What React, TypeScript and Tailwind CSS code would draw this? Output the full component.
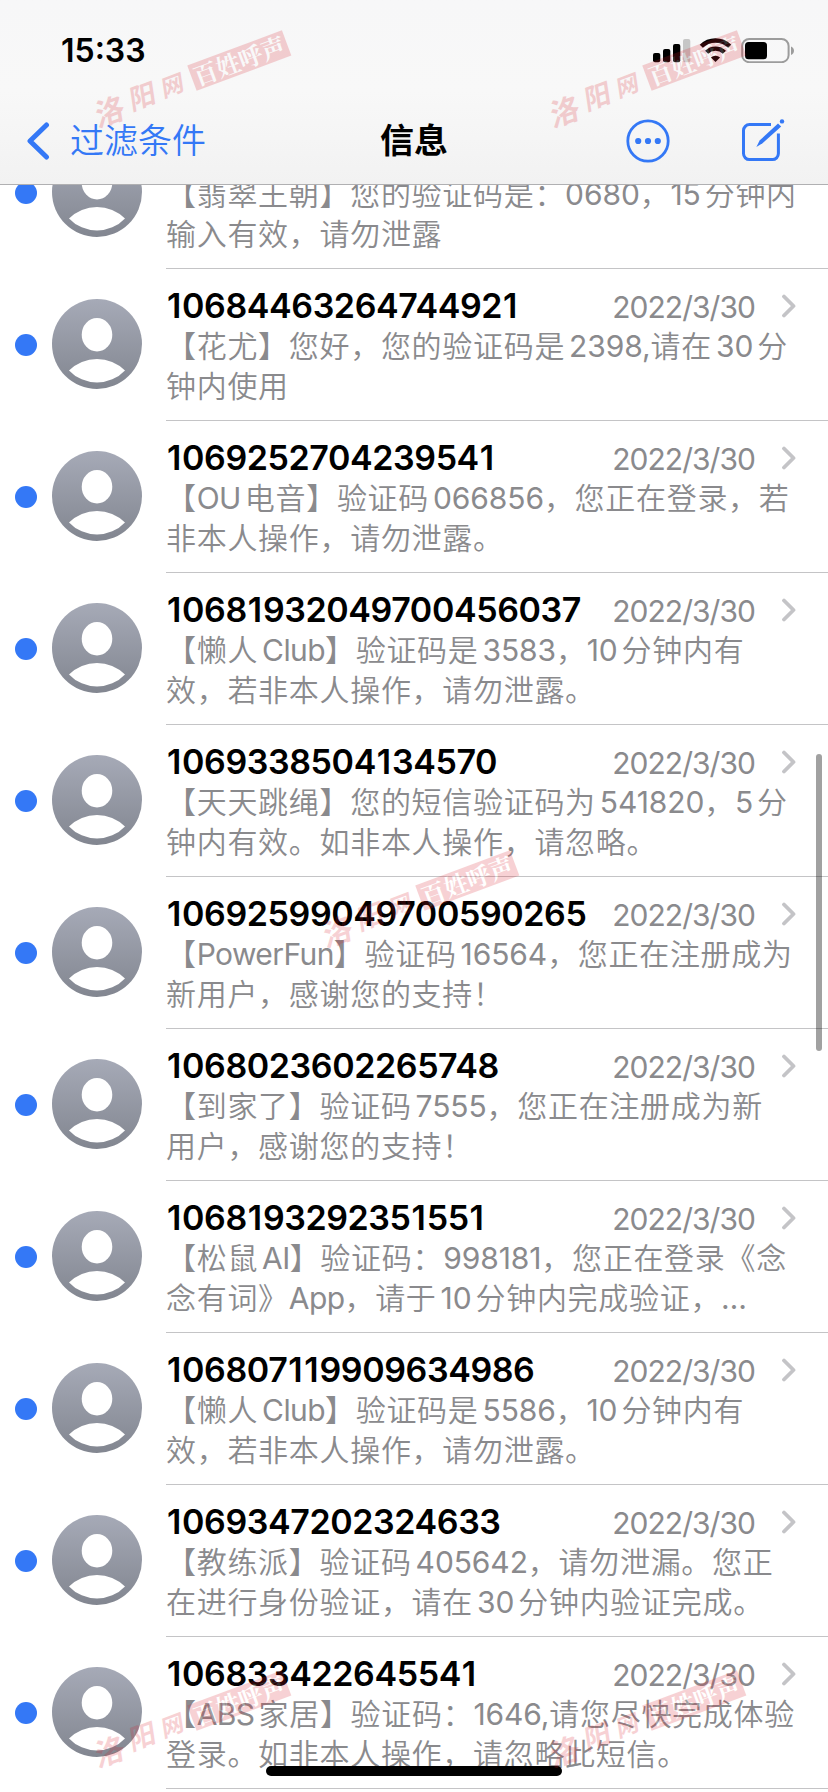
import React from "react";

type Message = {
  sender?: string;
  date?: string;
  lines: string[];
};

const messages: Message[] = [
  { lines: ["【翡翠王朝】您的验证码是：0680，15分钟内", "输入有效，请勿泄露"] },
  {
    sender: "10684463264744921",
    date: "2022/3/30",
    lines: ["【花尤】您好，您的验证码是2398,请在30分", "钟内使用"],
  },
  {
    sender: "1069252704239541",
    date: "2022/3/30",
    lines: ["【OU电音】验证码066856，您正在登录，若", "非本人操作，请勿泄露。"],
  },
  {
    sender: "10681932049700456037",
    date: "2022/3/30",
    lines: ["【懒人Club】验证码是3583，10分钟内有", "效，若非本人操作，请勿泄露。"],
  },
  {
    sender: "1069338504134570",
    date: "2022/3/30",
    lines: ["【天天跳绳】您的短信验证码为541820，5分", "钟内有效。如非本人操作，请忽略。"],
  },
  {
    sender: "10692599049700590265",
    date: "2022/3/30",
    lines: ["【PowerFun】验证码16564，您正在注册成为", "新用户，感谢您的支持！"],
  },
  {
    sender: "1068023602265748",
    date: "2022/3/30",
    lines: ["【到家了】验证码7555，您正在注册成为新", "用户，感谢您的支持！"],
  },
  {
    sender: "1068193292351551",
    date: "2022/3/30",
    lines: ["【松鼠AI】验证码：998181，您正在登录《念", "念有词》App，请于10分钟内完成验证，…"],
  },
  {
    sender: "106807119909634986",
    date: "2022/3/30",
    lines: ["【懒人Club】验证码是5586，10分钟内有", "效，若非本人操作，请勿泄露。"],
  },
  {
    sender: "1069347202324633",
    date: "2022/3/30",
    lines: ["【教练派】验证码405642，请勿泄漏。您正", "在进行身份验证，请在30分钟内验证完成。"],
  },
  {
    sender: "106833422645541",
    date: "2022/3/30",
    lines: ["【ABS家居】验证码：1646,请您尽快完成体验", "登录。如非本人操作，请忽略此短信。"],
  },
];

const HANZI = /[\u4e00-\u9fff]/;

// adds a small gap where latin letters or digits touch a hanzi
const PreviewLine = ({ text }: { text: string }) => {
  const parts = text.split(/([A-Za-z0-9,…]+)/);
  return (
    <p className="h-10 whitespace-nowrap text-[30px] leading-10 font-[350] tracking-[0.7px]">
      {parts.map((part, i) => {
        if (i % 2 === 0) return part;
        const before = HANZI.test(parts[i - 1].slice(-1));
        const after = HANZI.test(parts[i + 1].charAt(0)) && !part.endsWith(",");
        const tracking = /[A-Za-z]/.test(part) ? "tracking-[-0.6px]" : "tracking-[-0.1px]";
        return (
          <span
            key={i}
            className={`font-normal ${tracking} ${before ? "ml-1" : ""} ${after ? "mr-1" : ""}`}
          >
            {part}
          </span>
        );
      })}
    </p>
  );
};

const Avatar = () => (
  <svg className="mb-[2px] ml-[15px] size-[90px] shrink-0" viewBox="0 0 90 90">
    <defs>
      <linearGradient id="avatar" x1="0" y1="0" x2="0" y2="1">
        <stop offset="0" stopColor="#a6aab7" />
        <stop offset="1" stopColor="#828690" />
      </linearGradient>
    </defs>
    <circle cx="45" cy="45" r="45" fill="url(#avatar)" />
    <ellipse cx="45" cy="35.7" rx="15.3" ry="16.7" fill="#fff" />
    <path d="M17 71.4A39.8 39.8 0 0 1 73 71.4A38.4 38.4 0 0 1 17 71.4Z" fill="#fff" />
  </svg>
);

// the "1" glyph is narrow, so it gets some extra room in phone numbers
const Sender = ({ value }: { value: string }) => (
  <span className="text-[34px] leading-[41px] font-semibold tracking-[-0.4px] whitespace-nowrap text-black">
    {value.split(/(1)/).map((part, i) =>
      part === "1" ? (
        <span key={i} className="mr-[1.2px] ml-[0.9px]">
          1
        </span>
      ) : (
        part
      )
    )}
  </span>
);

const MessageRow = ({ message }: { message: Message }) => (
  <li className="flex h-[152px] items-center pl-[15px]">
    <span className="size-[22px] shrink-0 rounded-full bg-[#3478f6]" />
    <Avatar />
    <div className="ml-6 h-full flex-1 border-b border-[#c4c4c6] pt-4">
      <div className="flex h-[41px] items-center">
        {message.sender && <Sender value={message.sender} />}
        <span className="mt-[2px] ml-auto text-[30px] leading-[38px] tracking-[-0.95px]">
          {message.date}
        </span>
        {message.date && (
          <svg className="mr-[31px] ml-[26px] h-6 w-4" viewBox="0 0 16 24" fill="none">
            <path
              d="M3 2.5L12.5 12L3 21.5"
              stroke="#c4c4c7"
              strokeWidth="3.8"
              strokeLinecap="round"
              strokeLinejoin="round"
            />
          </svg>
        )}
      </div>
      {message.lines.map((line) => (
        <PreviewLine key={line} text={line} />
      ))}
    </div>
  </li>
);

const StatusBar = () => (
  <div className="flex h-[101px] items-center justify-between pl-[61px]">
    <span className="text-[32px] leading-10 font-semibold text-black">15:33</span>
    <svg className="mr-8 mb-px h-[26px] w-[144px]" viewBox="652 36 144 26">
      <rect x="653" y="52" width="7.3" height="9.3" rx="2" />
      <rect x="663" y="48" width="7.3" height="13.3" rx="2" />
      <rect x="673" y="43" width="7.3" height="18.3" rx="2" />
      <rect x="683" y="38" width="7.3" height="23.3" rx="2" fill="#c6c6c6" />
      <g fill="none" stroke="#000" strokeWidth="4.4">
        <path d="M701.3 45.3A20.2 20.2 0 0 1 729.7 45.3" />
        <path d="M706.6 51.3A12.6 12.6 0 0 1 724.4 51.3" />
      </g>
      <path d="M715.5 61L710.9 56.6A6.6 6.6 0 0 1 720.1 56.6Z" />
      <rect x="742.2" y="38" width="46.4" height="23.2" rx="7" fill="none" stroke="#9c9c9c" strokeWidth="2" />
      <rect x="745" y="41" width="22" height="17.2" rx="3.5" />
      <path d="M791 45.5C795 47 795 52.5 791 54Z" fill="#9c9c9c" />
    </svg>
  </div>
);

const NavBar = () => (
  <div className="grid h-20 grid-cols-3 items-center pb-px text-[#3478f6]">
    <div className="flex items-center pl-[26px]">
      <svg className="h-[38px] w-6" viewBox="0 0 24 38" fill="none">
        <path
          d="M20.5 3L4 19L20.5 35"
          stroke="currentColor"
          strokeWidth="5"
          strokeLinecap="round"
          strokeLinejoin="round"
        />
      </svg>
      <span className="ml-5 text-[34px] leading-10 font-[350] whitespace-nowrap">过滤条件</span>
    </div>
    <h1 className="text-center text-[34px] leading-10 font-bold text-black">信息</h1>
    <div className="flex items-center justify-end gap-[71px] pr-[42px]">
      <svg className="size-11" viewBox="0 0 44 44">
        <circle cx="22" cy="22" r="20.2" fill="none" stroke="currentColor" strokeWidth="2.8" />
        <circle cx="12.2" cy="22" r="3.1" fill="currentColor" />
        <circle cx="22" cy="22" r="3.1" fill="currentColor" />
        <circle cx="31.8" cy="22" r="3.1" fill="currentColor" />
      </svg>
      <svg className="h-11 w-[45px]" viewBox="741 118 45 44" fill="none" stroke="currentColor">
        <path
          d="M771 123.6H749.5A6 6 0 0 0 743.5 129.6V152.6A6 6 0 0 0 749.5 158.6H772.4A6 6 0 0 0 778.4 152.6V132.5"
          strokeWidth="3"
        />
        <path d="M778 122.5L781.2 125.5L762.5 142.3L756.4 146L759.6 139.6Z" fill="currentColor" stroke="none" />
        <circle cx="782" cy="120.4" r="2.2" fill="currentColor" stroke="none" />
      </svg>
    </div>
  </div>
);

const Watermark = ({ className }: { className: string }) => (
  <div
    className={`absolute flex h-[27px] w-[204px] origin-center -rotate-[20.4deg] items-center whitespace-nowrap opacity-20 ${className}`}
  >
    <div className="flex -skew-x-12 items-center gap-[7px] leading-7 font-bold text-[#d9202c]">
      <span className="mt-1 text-[30px]">洛</span>
      <span className="text-[27px]">阳</span>
      <span className="text-[23px]">网</span>
    </div>
    <span className="ml-auto h-[27px] w-[101px] bg-[#d9202c] text-center font-['Noto_Serif_CJK_SC','Noto_Sans_CJK_SC',serif] text-[24px] leading-[26px] font-bold text-white">
      百姓呼声
    </span>
  </div>
);

const App = () => {
  return (
    <div className="relative h-[1792px] w-[828px] overflow-hidden bg-white font-['Inter','Noto_Sans_CJK_SC',sans-serif] text-[#8a8a8d]">
      <header className="relative z-10 h-[185px] border-b border-[#b0b0b2] bg-linear-to-b from-[#f7f7f8] via-[#f8f8f8] to-[#f2f2f2]">
        <StatusBar />
        <NavBar />
      </header>
      <ul className="-mt-[68px]">
        {messages.map((message, i) => (
          <MessageRow key={i} message={message} />
        ))}
      </ul>

      <div className="absolute top-[754px] right-[6px] h-[297px] w-[6px] rounded-full bg-black/37" />
      <div className="absolute top-[1766px] left-[266px] h-[10px] w-[296px] rounded-full bg-black" />

      <div className="pointer-events-none absolute inset-0 z-20">
        <Watermark className="top-[65px] left-[89px]" />
        <Watermark className="top-[65px] left-[544px]" />
        <Watermark className="top-[885px] left-[317px]" />
        <Watermark className="top-[1705px] left-[89px]" />
        <Watermark className="top-[1705px] left-[544px]" />
      </div>
    </div>
  );
};

export default App;
